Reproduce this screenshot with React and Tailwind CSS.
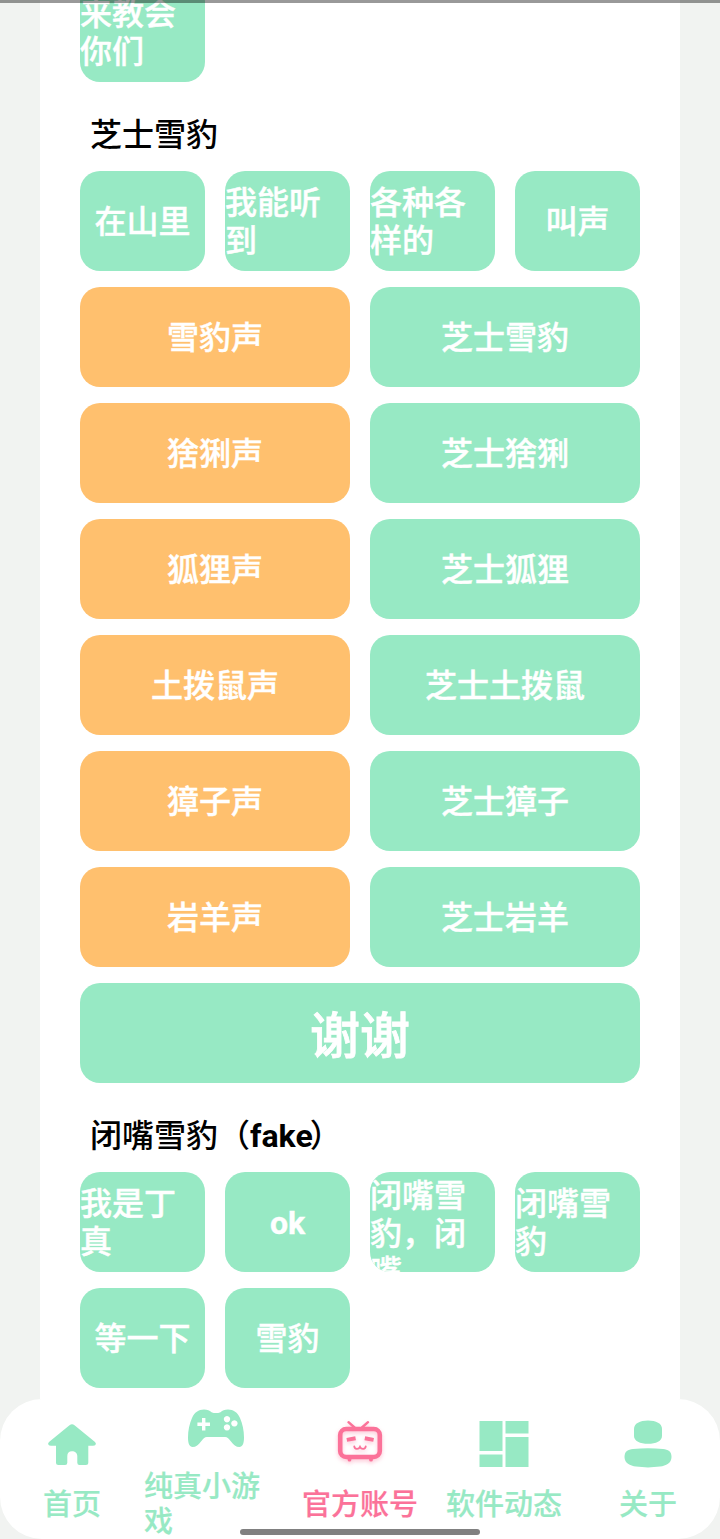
import clsx from "clsx";

const HomeIcon = () => (
	<svg viewBox="0 0 56 48" className="w-14 h-12 shrink-0" fill="currentColor">
		<path d="M25.5 5.2Q28 3.2 30.5 5.2L51 22Q52.6 23.6 51.4 25Q50.8 25.8 49 25.8H44.3V42.5Q44.3 45 41.8 45H35.5Q33.3 45 33.3 42.8V36C33.3 33 31 31.2 28 31.2S23.3 33 23.3 36V42.8Q23.3 45 21.1 45H14.5Q12 45 12 42.5V25.8H7Q5.2 25.8 4.6 25Q3.4 23.6 5 22Z" />
	</svg>
);

const GameIcon = () => (
	<svg viewBox="0 0 56 48" className="w-14 h-12 shrink-0" fill="currentColor">
		<path
			fillRule="evenodd"
			d="M16 7.600C10.500 7.600 6.500 10.500 4 16C1.500 21.500 0 28.500 0 35.500C0 41.500 1.500 45 4.600 45C8 45 10.500 43 13 39.500C15 36.800 16.600 35 19 35H37C39.400 35 41 36.800 43 39.500C45.500 43 48 45 51.400 45C54.500 45 56 41.500 56 35.500C56 28.500 54.500 21.500 52 16C49.500 10.500 45.500 7.600 40 7.600C36.500 7.600 34.500 8.500 32.500 10.200Q28 12 23.500 10.200C21.500 8.500 19.500 7.600 16 7.600ZM14 16H17.400V20.600H22V24H17.400V28.400H14V24H9.400V20.600H14ZM39 14A3.200 3.200 0 1 1 38.990 14ZM46.400 18.200A3.200 3.200 0 1 1 46.390 18.200ZM39 22.200A3.200 3.200 0 1 1 38.990 22.200Z"
		/>
	</svg>
);

const TvIcon = () => (
	<svg viewBox="0 0 56 48" className="w-14 h-12 shrink-0 overflow-visible drop-shadow-[0_2px_2px_#fb729966]" fill="none" stroke="currentColor">
		<path d="M16.500 2.200L22.500 7.500M36 2.200L30 7.500" strokeWidth="2.400" strokeLinecap="round" />
		<rect x="8.200" y="9" width="39.600" height="28" rx="6" strokeWidth="4.600" />
		<path d="M14.800 19.900L23.600 18.300M32.800 18.300L41.600 19.900" strokeWidth="4" />
		<path d="M22.300 26.500C22.600 29.500 26.500 29.800 28 26.900C29.500 29.800 33.400 29.500 33.700 26.500" strokeWidth="1.900" strokeLinecap="round" />
		<path d="M17.500 39V39.700M39 39V39.700" strokeWidth="3.800" strokeLinecap="round" />
	</svg>
);

const GridIcon = () => (
	<svg viewBox="0 0 56 48" className="w-14 h-12 shrink-0" fill="currentColor">
		<path d="M3.500 1H26.500V31H3.500ZM29.500 1H52.500V13.500H29.500ZM29.500 17H52.500V47H29.500ZM3.500 34.500H26.500V47H3.500Z" />
	</svg>
);

const AboutIcon = () => (
	<svg viewBox="0 0 56 48" className="w-14 h-12 shrink-0" fill="currentColor">
		<path d="M14 9C14 3.500 20 .6 28 .6S42 3.500 42 9V16C42 21 36 23.800 28 23.800S14 21 14 16Z" />
		<path d="M4.500 37C4.500 31 8 29.600 13 29Q28 27.600 43 29C48 29.600 51.500 31 51.500 37C51.500 43 46 45.600 40 46.600Q28 48.200 16 46.600C10 45.600 4.500 43 4.500 37Z" />
	</svg>
);

const firstRow = ["在山里", "我能听到", "各种各样的", "叫声"];

const soundPairs = [
	["雪豹声", "芝士雪豹"],
	["猞猁声", "芝士猞猁"],
	["狐狸声", "芝士狐狸"],
	["土拨鼠声", "芝士土拨鼠"],
	["獐子声", "芝士獐子"],
	["岩羊声", "芝士岩羊"],
];

const fakeRow = ["我是丁真", "ok", "闭嘴雪豹，闭嘴", "闭嘴雪豹", "等一下", "雪豹"];

const navItems = [
	{ label: "首页", Icon: HomeIcon },
	{ label: "纯真小游戏", Icon: GameIcon },
	{ label: "官方账号", Icon: TvIcon, active: true },
	{ label: "软件动态", Icon: GridIcon },
	{ label: "关于", Icon: AboutIcon },
];

const SoundButton = ({ children, orange, large }) => (
	<button
		className={clsx(
			"flex h-[100px] w-full items-center justify-center overflow-hidden rounded-[20px] text-left text-white",
			orange ? "bg-[#ffc06e]" : "bg-[#97e9c4]",
			large
				? "pt-2 text-[50px] leading-[58px] [-webkit-text-stroke:0.8px_currentColor]"
				: "pt-0.5 text-[32px] leading-[38px] [-webkit-text-stroke:0.4px_currentColor]"
		)}
	>
		<span className="max-h-[92px]">{children}</span>
	</button>
);

const SectionTitle = ({ children }) => (
	<h2 className="flex h-[89px] items-center pt-[17px] pl-2.5 text-[32px] leading-[38px] font-medium text-black">
		{children}
	</h2>
);

const App = () => {
	return (
		<div className="relative flex h-[1539px] w-[720px] flex-col overflow-hidden bg-[#f1f3f1] font-['Roboto','Noto_Sans_CJK_SC',sans-serif] font-medium">
			<div className="absolute inset-x-0 top-0 h-[3px] bg-black/40" />

			<main className="mx-10 h-[1399px] shrink-0 overflow-hidden bg-white px-10">
				{/* Previous section, scrolled mostly out of view */}
				<div className="-mt-[18px] grid grid-cols-4 gap-x-5">
					<SoundButton>来教会你们</SoundButton>
				</div>

				<SectionTitle>芝士雪豹</SectionTitle>
				<div className="grid grid-cols-4 gap-x-5 gap-y-4">
					{firstRow.map((name) => (
						<SoundButton key={name}>{name}</SoundButton>
					))}
				</div>
				<div className="mt-4 grid grid-cols-2 gap-x-5 gap-y-4">
					{soundPairs.map(([sound, cheese]) => (
						<div key={sound} className="contents">
							<SoundButton orange>{sound}</SoundButton>
							<SoundButton>{cheese}</SoundButton>
						</div>
					))}
				</div>
				<div className="mt-4">
					<SoundButton large>谢谢</SoundButton>
				</div>

				<SectionTitle>
					闭嘴雪豹（<span className="-mr-[3px] font-bold">fake</span>）
				</SectionTitle>
				<div className="grid grid-cols-4 gap-x-5 gap-y-4">
					{fakeRow.map((name) => (
						<SoundButton key={name}>
							{name === "ok" ? <b>{name}</b> : name}
						</SoundButton>
					))}
				</div>
			</main>

			<nav className="grid h-[140px] shrink-0 grid-cols-5 rounded-[42px] bg-white">
				{navItems.map(({ label, Icon, active }) => (
					<a
						key={label}
						className={clsx(
							"flex flex-col items-center justify-center gap-5 pt-[3px]",
							active ? "text-[#fb7299]" : "text-[#97e9c4]"
						)}
					>
						<Icon />
						<span className="text-[29px] leading-[35px] [-webkit-text-stroke:0.2px_currentColor]">{label}</span>
					</a>
				))}
			</nav>

			{/* Home indicator */}
			<div className="absolute bottom-1 left-1/2 h-1.5 w-60 -translate-x-1/2 rounded-full bg-[#808080]" />
		</div>
	);
};

export default App;
